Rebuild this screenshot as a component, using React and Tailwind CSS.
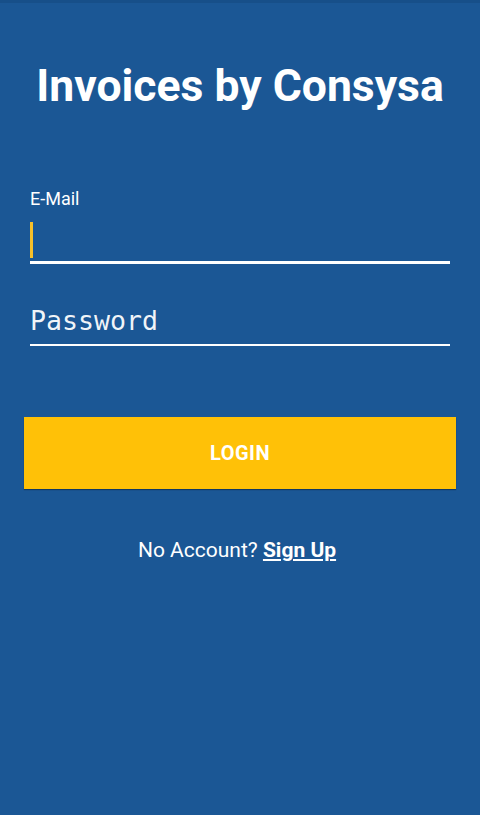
import React from 'react';

export default function App() {
  return (
    <div
      className="min-h-[815px] w-full bg-[#1b5795] flex flex-col border-t-[3px] border-[#174f89]"
      style={{ fontFamily: 'Roboto, "Liberation Sans", sans-serif' }}
    >
      <h1 className="mt-[53px] text-center text-[44.5px] leading-[60px] font-bold text-white">
        Invoices by Consysa
      </h1>

      <div className="mt-[73px] px-[30px] flex flex-col">
        <label className="text-[18px] leading-5 text-white">E-Mail</label>
        <div className="mt-[13px] h-[42px] border-b-[3px] border-white flex items-start">
          <span className="block w-[3px] h-[36px] bg-[#f6c02a]" />
        </div>

        <div className="mt-[43px] h-[39px] border-b-2 border-white flex items-end pb-[9px]">
          <span
            className="text-[26.6px] leading-none text-white/95"
            style={{ fontFamily: '"DejaVu Sans Mono", "Liberation Mono", monospace' }}
          >
            Password
          </span>
        </div>
      </div>

      <div className="mt-[71px] px-6">
        <button
          type="button"
          className="w-full h-[72px] bg-[#ffc107] text-white font-bold text-[20px] tracking-wide shadow-[0_1px_1px_rgba(0,0,0,0.35)]"
        >
          LOGIN
        </button>
      </div>

      <p className="mt-[46px] pr-[6px] text-center text-[21px] text-white">
        No Account? <a className="font-bold underline underline-offset-2">Sign Up</a>
      </p>
    </div>
  );
}
